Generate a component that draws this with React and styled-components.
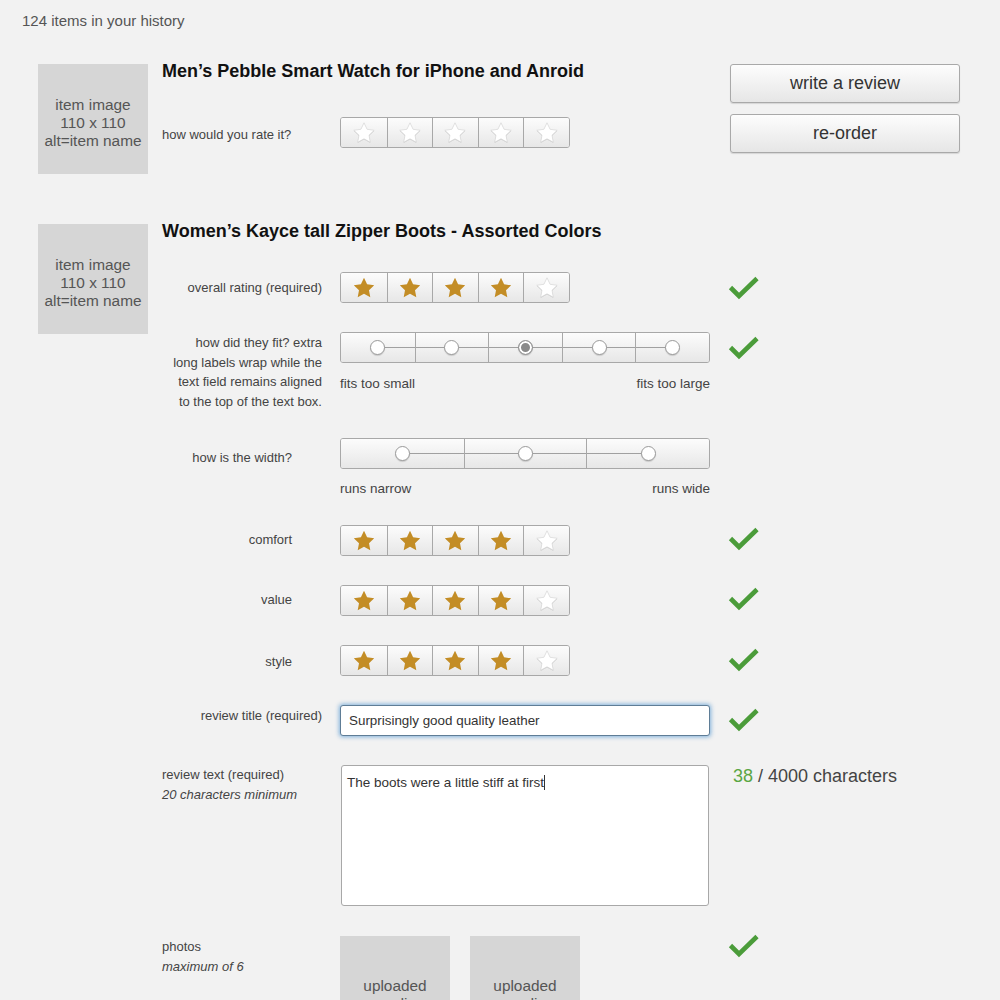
import React from 'react'
import styled, { createGlobalStyle, css } from 'styled-components'

const GlobalStyle = createGlobalStyle`
  html, body {
    margin: 0;
    padding: 0;
    background: #f2f2f2;
  }
  body {
    font-family: "Liberation Sans", Arial, sans-serif;
    color: #444;
  }
`

const Page = styled.div`
  padding-top: 12px;
  min-height: 1000px;
`

const Header = styled.div`
  padding-left: 22px;
  font-size: 15px;
  line-height: 18px;
  color: #555;
`

const ItemList = styled.div`
  margin-top: 34px;
  padding-left: 38px;
`

const Item = styled.div`
  display: flex;
  align-items: flex-start;
  gap: 14px;
  margin-bottom: 50px;
`

const GreyBox = styled.div`
  flex: none;
  width: 110px;
  height: 110px;
  background: #d6d6d6;
  display: flex;
  align-items: center;
  justify-content: center;
  text-align: center;
  font-size: 15.4px;
  line-height: 18px;
  color: #555;
  padding-top: ${p => p.$push || 0}px;
  box-sizing: border-box;
`

const Main = styled.div`
  flex: 1;
  min-width: 0;
`

const Title = styled.h2`
  margin: -3px 0 0;
  font-size: 18px;
  line-height: 20px;
  font-weight: bold;
  color: #111;
  white-space: nowrap;
`

const Actions = styled.div`
  flex: none;
  width: 230px;
  margin-right: 40px;
  display: flex;
  flex-direction: column;
  gap: 11px;
`

const Button = styled.button`
  height: 39px;
  border: 1px solid #a9a9a9;
  border-radius: 3px;
  background: linear-gradient(#fdfdfd, #e6e6e6);
  box-shadow: 0 1px 1px rgba(0, 0, 0, 0.12);
  font-family: inherit;
  font-size: 18px;
  color: #333;
  cursor: pointer;
`

const Row = styled.div`
  display: grid;
  grid-template-columns: 160px 370px 1fr;
  column-gap: 18px;
  align-items: start;
  margin-top: ${p => p.$mt}px;
`

const Label = styled.div`
  font-size: 13px;
  line-height: 19.5px;
  color: #444;
  padding-top: ${p => p.$pt || 0}px;
  padding-right: ${p => p.$pr || 0}px;
  padding-left: ${p => (p.$align === 'left' ? 0 : 8)}px;
  text-align: ${p => p.$align || 'right'};
`

const Hint = styled.div`
  font-style: italic;
`

const Check = styled.svg`
  display: block;
  margin-top: ${p => (p.$mt != null ? p.$mt : 4)}px;
`

const Bar = styled.div`
  display: grid;
  grid-template-columns: repeat(${p => p.$count}, 1fr);
  width: ${p => p.$width}px;
  height: 31px;
  box-sizing: border-box;
  border: 1px solid #a8a8a8;
  border-radius: 3px;
  overflow: hidden;
`

const Cell = styled.div`
  position: relative;
  display: flex;
  align-items: center;
  justify-content: center;
  background: linear-gradient(#fcfcfc, #e7e7e7);
  & + & {
    border-left: 1px solid #a8a8a8;
  }
  ${p => p.$line && css`
    &::before {
      content: '';
      position: absolute;
      top: 50%;
      height: 1px;
      margin-top: -1px;
      background: #a0a0a0;
      left: ${p.$line === 'right' ? '50%' : '0'};
      right: ${p.$line === 'left' ? '50%' : '0'};
    }
  `}
`

const Dot = styled.span`
  position: relative;
  width: 13px;
  height: 13px;
  border-radius: 50%;
  border: 1px solid #9a9a9a;
  background: ${p => (p.$on ? '#8a8a8a' : '#fff')};
  box-shadow: ${p => (p.$on ? 'inset 0 0 0 2px #fff, ' : '')}0 1px 1px rgba(0, 0, 0, 0.15);
`

const Ends = styled.div`
  display: flex;
  justify-content: space-between;
  width: ${p => p.$width}px;
  margin-top: ${p => p.$mt}px;
  font-size: 13.5px;
  line-height: 19px;
  color: #444;
`

const TextInput = styled.input`
  display: block;
  width: 370px;
  height: 31px;
  box-sizing: border-box;
  padding: 0 8px;
  border: 1px solid #5f7d96;
  border-radius: 3px;
  box-shadow: 0 0 4px 1px rgba(80, 150, 210, 0.7);
  font-family: inherit;
  font-size: 13.4px;
  color: #333;
  background: #fff;
  outline: none;
`

const TextBox = styled.div`
  width: 368px;
  height: 141px;
  box-sizing: border-box;
  margin-left: 1px;
  padding: 8px 5px;
  border: 1px solid #a8a8a8;
  border-radius: 3px;
  background: #fff;
  font-size: 13.5px;
  line-height: 18px;
  color: #333;
`

const Caret = styled.span`
  border-right: 1px solid #333;
`

const Counter = styled.div`
  font-size: 18px;
  line-height: 20px;
  color: #444;
  padding-left: 5px;
  margin-top: 1px;
`

const Count = styled.span`
  color: #5aa643;
`

const Media = styled.div`
  display: flex;
  gap: 20px;
`

const starPath = 'M12 1.8l3.1 6.5 7.1 1-5.2 4.9 1.3 7L12 17.8l-6.3 3.4 1.3-7L1.8 9.3l7.1-1z'

const Star = ({ on }) => (
  <svg width="24" height="24" viewBox="0 0 24 24">
    {on ? (
      <path d={starPath} fill="#c38d26" />
    ) : (
      <>
        <path d={starPath} fill="#c8c8c8" transform="translate(0 0.8)" opacity="0.75" />
        <path d={starPath} fill="#fff" stroke="#d0d0d0" strokeWidth="0.6" />
      </>
    )}
  </svg>
)

const Stars = ({ value = 0 }) => (
  <Bar $count={5} $width={230}>
    {[0, 1, 2, 3, 4].map(i => (
      <Cell key={i}>
        <Star on={i < value} />
      </Cell>
    ))}
  </Bar>
)

const Scale = ({ count, selected, width, left, right, mt }) => (
  <div>
    <Bar $count={count} $width={width}>
      {Array.from({ length: count }).map((_, i) => (
        <Cell key={i} $line={i === 0 ? 'right' : i === count - 1 ? 'left' : 'full'}>
          <Dot $on={i === selected} />
        </Cell>
      ))}
    </Bar>
    <Ends $width={width} $mt={mt}>
      <span>{left}</span>
      <span>{right}</span>
    </Ends>
  </div>
)

const Tick = ({ mt }) => (
  <Check $mt={mt} width="32" height="24" viewBox="0 0 32 24">
    <polyline points="2.5,11.5 11,20 29,2.5" fill="none" stroke="#4b9c3a" strokeWidth="4.6" />
  </Check>
)

const ItemImage = () => (
  <GreyBox $push={8}>
    item image<br />110 x 110<br />alt=item name
  </GreyBox>
)

export default function App() {
  return (
    <Page>
      <GlobalStyle />
      <Header>124 items in your history</Header>
      <ItemList>
        <Item>
          <ItemImage />
          <Main>
            <Title>Men’s Pebble Smart Watch for iPhone and Anroid</Title>
            <Row $mt={36}>
              <Label $align="left" $pt={8}>how would you rate it?</Label>
              <Stars value={0} />
            </Row>
          </Main>
          <Actions>
            <Button>write a review</Button>
            <Button>re-order</Button>
          </Actions>
        </Item>

        <Item>
          <ItemImage />
          <Main>
            <Title>Women’s Kayce tall Zipper Boots - Assorted Colors</Title>

            <Row $mt={31}>
              <Label $pt={6}>overall rating (required)</Label>
              <Stars value={4} />
              <Tick />
            </Row>

            <Row $mt={29}>
              <Label $pt={1}>
                how did they fit? extra long labels wrap while the text field remains aligned to the top of the text box.
              </Label>
              <Scale count={5} selected={2} width={370} left="fits too small" right="fits too large" mt={11} />
              <Tick />
            </Row>

            <Row $mt={27}>
              <Label $pt={10} $pr={30}>how is the width?</Label>
              <Scale count={3} width={370} left="runs narrow" right="runs wide" mt={10} />
            </Row>

            <Row $mt={27}>
              <Label $pt={5} $pr={30}>comfort</Label>
              <Stars value={4} />
              <Tick mt={2} />
            </Row>

            <Row $mt={29}>
              <Label $pt={5} $pr={30}>value</Label>
              <Stars value={4} />
              <Tick mt={2} />
            </Row>

            <Row $mt={29}>
              <Label $pt={7} $pr={30}>style</Label>
              <Stars value={4} />
              <Tick mt={3} />
            </Row>

            <Row $mt={29}>
              <Label $pt={1}>review title (required)</Label>
              <TextInput readOnly value="Surprisingly good quality leather" />
              <Tick mt={3} />
            </Row>

            <Row $mt={29}>
              <Label $align="left">
                review text (required)
                <Hint>20 characters minimum</Hint>
              </Label>
              <TextBox>
                <Caret>The boots were a little stiff at first</Caret>
              </TextBox>
              <Counter>
                <Count>38</Count> / 4000 characters
              </Counter>
            </Row>

            <Row $mt={30}>
              <Label $align="left" $pt={1}>
                photos
                <Hint>maximum of 6</Hint>
              </Label>
              <Media>
                <GreyBox $push={8}>uploaded<br />media</GreyBox>
                <GreyBox $push={8}>uploaded<br />media</GreyBox>
              </Media>
              <Tick mt={-2} />
            </Row>
          </Main>
        </Item>
      </ItemList>
    </Page>
  )
}
